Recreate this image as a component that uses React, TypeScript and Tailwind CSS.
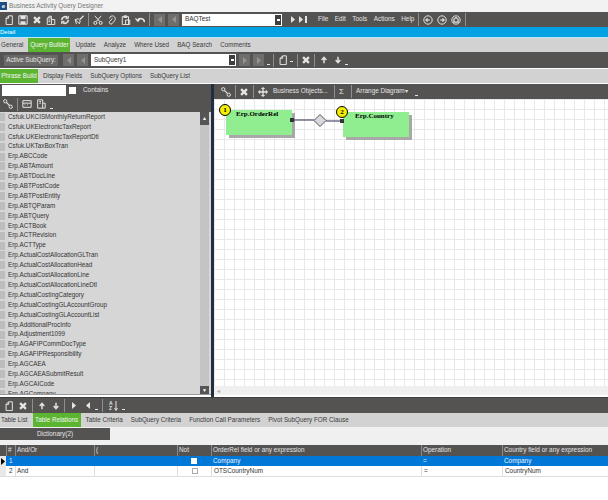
import React from "react";

const ink = "#e4e4e4";

function Ic({ w = 10, children }: { w?: number; children: React.ReactNode }) {
  return (
    <svg width={w} height={w} viewBox="0 0 12 12" className="shrink-0" fill="none" stroke={ink} strokeWidth="1.200">
      {children}
    </svg>
  );
}
const Doc = () => <Ic><path d="M2.500 11.500V4l3-3h4.500v10.500z" /><path d="M2.500 4h3V1" /></Ic>;
const Save = () => <Ic><path d="M1 1h10v10H1z" /><path d="M3.500 1v3.500h5V1M3 11V7.500h6V11" fill="#e4e4e4" stroke="none" /><path d="M3.500 1v3.500h5V1" /></Ic>;
const Cross = () => <Ic><path d="M2.500 2.500l7 7M9.500 2.500l-7 7" strokeWidth="2.800" /></Ic>;
const Copy = () => <Ic><path d="M1.500 3.500h5v8h-5zM6.500 5.500h4v6h-4M3.500 3.500v-2h3v2" /><path d="M3 6h2M3 8h2" /></Ic>;
const Refresh = () => <Ic><path d="M10 6a4 4 0 0 1-7 2.600M2 6a4 4 0 0 1 7-2.600" strokeWidth="2" /><path d="M10 1v3.500H6.500M2 11V7.500h3.500" /></Ic>;
const Brush = () => <Ic><path d="M11.500 1L7 5.500" strokeWidth="1.600" /><path d="M1.500 5.500l5 5 1-3.500-2.500-2.500zM1.500 5.500l1.500 5.500" /></Ic>;
const Scissors = () => <Ic><circle cx="2.800" cy="9.500" r="1.800" /><circle cx="9.200" cy="9.500" r="1.800" /><path d="M3.800 8l6-7M8.200 8l-6-7" /></Ic>;
const Clip = () => <Ic><path d="M3 4a3.500 3.500 0 1 1 6 3l-3 3.500a2 2 0 0 1-3-2.500l3.500-4" /></Ic>;
const Paste = () => <Ic><path d="M1.500 2h7.500v9.500H1.500zM3.500 1h3.500v2H3.500z" /><path d="M5.500 6h5v5.500h-5z" /></Ic>;
const Undo = () => <Ic><path d="M3 6.500a4.200 3.500 0 0 1 8 2" strokeWidth="1.800" /><path d="M.5 4l3 3.500L6 4.500" strokeWidth="1.500" /></Ic>;
const Link = () => <Ic><rect x=".8" y=".8" width="3.800" height="3.800" rx="1.600" /><rect x="7.400" y="7.400" width="3.800" height="3.800" rx="1.600" /><path d="M4 4l4 4" strokeWidth="1.500" /></Ic>;
const Up = () => <Ic w={8}><path d="M6 2v9M2.500 6L6 2l3.500 4" strokeWidth="2.200" /></Ic>;
const Down = () => <Ic w={8}><path d="M6 10V1M2.500 6L6 10l3.500-4" strokeWidth="2.200" /></Ic>;
const Move = () => <Ic><path d="M6 2v8M2 6h8" strokeWidth="1.600" /><path d="M4 2.500L6 .5l2 2M4 9.500L6 11.500l2-2M2.500 4L.5 6l2 2M9.500 4l2 2-2 2" fill="#e4e4e4" /></Ic>;
const Sep = () => <span className="w-px h-[13px] bg-[#8f8f8f] shrink-0" />;
const Drop = () => <span className="self-end mb-[3px] w-[3px] h-[1px] bg-[#e4e4e4] shrink-0" />;
const Circ = ({ d }: { d: string }) => <Ic><circle cx="6" cy="6" r="5" /><path d={d} strokeWidth="1.400" /></Ic>;
const Tri = ({ left, c = "#e4e4e4" }: { left?: boolean; c?: string }) => (
  <svg width="6" height="9" viewBox="0 0 6 9" className="shrink-0"><path d={left ? "M5 1v7L1 4.500z" : "M1 1v7l4-3.500z"} fill={c} /></svg>
);
const Grey = ({ left = true }: { left?: boolean }) => (
  <span className="w-[11px] h-[12px] bg-[#6f6e6d] flex items-center justify-center shrink-0"><Tri left={left} c="#939393" /></span>
);
const Combo = () => (
  <span className="w-[8px] h-[12px] bg-[#3f3f3f] border border-white flex items-center justify-center shrink-0"><span className="w-[3px] h-[2px] bg-white" /></span>
);

const Tab = ({ label, on, w }: { label: string; on?: boolean; w?: string }) =>
  on ? (
    <span className={`bg-[#5cb531] text-[#f4f4f4] h-full flex items-center justify-center -mx-[3px] ${w ?? ""}`}>{label}</span>
  ) : (
    <span className="text-[#3a3a3a] flex items-center h-full">{label}</span>
  );

const tables = [
  "Csfuk.UKCISMonthlyReturnReport", "Csfuk.UKElectronicTaxReport", "Csfuk.UKElectronicTaxReportDtl", "Csfuk.UKTaxBoxTran",
  "Erp.ABCCode", "Erp.ABTAmount", "Erp.ABTDocLine", "Erp.ABTPostCode", "Erp.ABTPostEntity", "Erp.ABTQParam", "Erp.ABTQuery",
  "Erp.ACTBook", "Erp.ACTRevision", "Erp.ACTType", "Erp.ActualCostAllocationGLTran", "Erp.ActualCostAllocationHead",
  "Erp.ActualCostAllocationLine", "Erp.ActualCostAllocationLineDtl", "Erp.ActualCostingCategory", "Erp.ActualCostingGLAccountGroup",
  "Erp.ActualCostingGLAccountList", "Erp.AdditionalProcInfo", "Erp.Adjustment1099", "Erp.AGAFIPCommDocType", "Erp.AGAFIPResponsibility",
  "Erp.AGCAEA", "Erp.AGCAEASubmitResult", "Erp.AGCAICode", "Erp.AGCompany",
];

const Badge = ({ n }: { n: number }) => (
  <span className="absolute -left-[7px] -top-[6px] w-[12px] h-[12px] rounded-full bg-[#f5f000] border border-black text-[7px] font-bold text-black flex items-center justify-center leading-none font-['Liberation_Serif',serif]">{n}</span>
);

const Node = ({ n, name, cls, pad }: { n: number; name: string; cls: string; pad: string }) => (
  <div className={`absolute bg-[#90ee90] shadow-[3px_3px_0_#a8a8a8] h-[25px] w-[66px] ${cls}`}>
    <Badge n={n} />
    <div className={`absolute top-[1px] text-[7px] font-bold text-black font-['Liberation_Serif',serif] whitespace-nowrap ${pad}`}>{name}</div>
  </div>
);

const cols = "grid grid-cols-[6px_9px_79px_83px_34px_210px_81px_1fr]";
const hc = "pl-[1px] h-full flex items-center border-l border-[#8a8a8a]";
const cc = "h-full flex items-center border-l border-[#dcdcdc]";

export default function App() {
  return (
    <div className="w-[608px] h-[500px] bg-white overflow-hidden flex flex-col font-['Liberation_Sans',sans-serif] text-[6.400px] leading-none">
      {/* title */}
      <div className="h-[12px] bg-[#f2f2f2] flex items-center gap-[2px] text-[#777]">
        <span className="w-[7px] h-[8px] bg-[#1d4f86] flex items-center justify-center text-white text-[6px] font-bold">e</span>
        Business Activity Query Designer
      </div>
      {/* main toolbar */}
      <div className="h-[15px] bg-[#555352] flex items-center text-[#e4e4e4] pl-[4px] gap-[4px]">
        <Doc /><Save /><Cross /><Copy /><Refresh /><Brush /><Sep /><Scissors /><Clip /><Paste /><Undo /><Sep />
        <span className="flex gap-[3px]"><Grey /><Grey /></span>
        <div className="flex mr-[4px]">
          <div className="w-[92px] h-[12px] -ml-[1px] bg-white text-[#333] flex items-center pl-[3px]">BAQTest</div>
          <Combo />
        </div>
        <span className="flex items-center gap-[2px]"><Tri /><Tri /><span className="w-[2px] h-[7px] -ml-[1px] bg-[#e4e4e4]" /></span>
        <span className="ml-[3px]"><Sep /></span>
        <span className="flex gap-[6.500px]"><span>File</span><span>Edit</span><span>Tools</span><span>Actions</span><span>Help</span></span>
        <Sep />
        <Circ d="M8.500 6h-5M5.500 4L3.500 6l2 2" /><Circ d="M3.500 6h5M6.500 4l2 2-2 2" /><Circ d="M3.500 8.500V5L6 3l2.500 2v3.500z" /><Sep />
      </div>
      {/* detail */}
      <div className="h-[11px] bg-[#00a2e3] border-b border-[#bfe6f5] text-white text-[6px] flex items-center">Detail</div>
      {/* tabs */}
      <div className="h-[14px] bg-[#d2d2d2] flex items-center gap-[8px] pl-[1px] text-[6.300px]">
        <Tab label="General" />
        <Tab label="Query Builder" on w="w-[42px]" />
        <Tab label="Update" /><Tab label="Analyze" /><Tab label="Where Used" /><Tab label="BAQ Search" /><Tab label="Comments" />
      </div>
      {/* subquery toolbar */}
      <div className="h-[17px] bg-[#555352] flex items-center text-[#e4e4e4] pl-[4px] gap-[3px] border-b border-white">
        <span className="bg-[#6a6968] h-[11px] w-[54px] flex items-center justify-center mr-[2px]">Active SubQuery:</span>
        <Grey /><Grey />
        <div className="flex">
          <div className="w-[137px] h-[12px] bg-white text-[#333] flex items-center pl-[3px]">SubQuery1</div>
          <Combo />
        </div>
        <Grey left={false} /><Grey left={false} /><Drop /><Sep />
        <span className="flex gap-[2px] ml-[1px] mr-[1px]"><Doc /><Drop /></span>
        <Sep /><Cross /><Sep />
        <span className="flex gap-[6px] ml-[2px]"><Up /><Down /></span><Drop />
      </div>
      {/* subtabs */}
      <div className="h-[15px] bg-[#d2d2d2] flex items-center gap-[8px] border-b border-white text-[6.300px]">
        <span className="-mr-[3px]"><span className="bg-[#5cb531] text-[#f4f4f4] h-[14px] w-[38px] flex items-center justify-center">Phrase Build</span></span>
        <Tab label="Display Fields" /><Tab label="SubQuery Options" /><Tab label="SubQuery List" />
      </div>
      {/* middle */}
      <div className="h-[313px] flex bg-white">
        <div className="w-[211px] flex flex-col bg-[#d6d6d6]">
          <div className="h-[12px] bg-[#555352] flex items-center text-[#e4e4e4] pl-[2px]">
            <span className="w-[64px] h-[11px] bg-white" />
            <span className="w-[7px] h-[7px] bg-white ml-[3px] mr-[7px]" />
            Contains
          </div>
          <div className="h-[16px] bg-[#555352] flex items-center pl-[3px] gap-[4px]">
            <Link /><Sep /><Ic><path d="M1 2h10v8H1zM1 5h10M3 7h1M6 7h1M9 7h0" /></Ic><Ic><path d="M2 1h6v10H2zM8 5h3v6H8M4 3h2M4 5h2" /></Ic><Drop />
          </div>
          <div className="flex-1 flex min-h-0 pr-[2px]">
            <div className="flex-1 min-w-0 overflow-hidden">
              {tables.map((t) => (
                <div key={t} className="h-[9.900px] flex items-center text-[#333] text-[6.300px]">
                  <span className="w-[5px] h-[8px] bg-[#bdbdbd] mr-[3px]" />
                  {t}
                </div>
              ))}
            </div>
            <div className="w-[9px] bg-[#c4c4c4] flex flex-col justify-between">
              <span className="h-[13px] bg-[#555] flex items-center justify-center text-white text-[5px]">▲</span>
              <span className="h-[8px] bg-[#555] flex items-center justify-center text-white text-[5px]">▼</span>
            </div>
          </div>
          <div className="h-[1px] bg-[#999]" />
          <div className="h-[2px] bg-white" />
        </div>
        <div className="w-[3px] bg-[#1f2f3d]" />
        <div className="flex-1 flex flex-col">
          <div className="h-[15px] bg-[#555352] flex items-center text-[#e4e4e4] pl-[7px] gap-[4px] shrink-0">
            <Link /><Sep /><span className="-ml-[1px]"><Cross /></span><Sep /><Move />
            <span className="ml-[1px] w-[57px]">Business Objects...</span><Sep />
            <span className="text-[8px] w-[8px]">Σ</span><Sep />
            <span className="w-[55px]">Arrange Diagram▾</span><Drop />
          </div>
          <div className="flex-1 relative bg-white bg-[linear-gradient(#e8e8e8_1px,transparent_1px),linear-gradient(90deg,#e8e8e8_1px,transparent_1px)] bg-[size:10px_10px]">
            <Node n={1} name="Erp.OrderRel" cls="left-[12px] top-[11px]" pad="left-[10px]" />
            <Node n={2} name="Erp.Country" cls="left-[129px] top-[13px]" pad="left-[12px]" />
            <svg className="absolute left-[75px] top-[13px]" width="58" height="17" viewBox="0 0 58 17">
              <path d="M3 8h22M37 9h16" stroke="#2a2a55" strokeWidth="1.200" />
              <path d="M31 2.500l6 6-6 6-6-6z" fill="#d8d8e0" stroke="#555" strokeWidth="1" />
              <rect x="1" y="6" width="4" height="4" fill="#333" />
              <rect x="51" y="7" width="4" height="4" fill="#333" />
            </svg>
            <div className="absolute left-0 right-0 bottom-[2px] h-[9px] bg-[#efefef] flex items-center pl-[3px] text-[#aaa] text-[6px]">◂</div>
            <div className="absolute left-0 right-0 bottom-0 h-[2px] bg-white" />
          </div>
        </div>
      </div>
      {/* bottom toolbar */}
      <div className="h-[16px] bg-[#555352] border-t border-[#3c3c3c] flex items-center pl-[4px] gap-[4px]">
        <Doc /><Cross /><Sep />
        <span className="flex gap-[6px] ml-[1px]"><Up /><Down /></span><Sep />
        <span className="flex gap-[8px] ml-[2px]"><Tri /><Tri left /></span><Drop /><Sep />
        <span className="flex items-center gap-[1px] ml-[2px]">
          <span className="flex flex-col text-[5px] font-bold text-[#e4e4e4]"><span>A</span><span>Z</span></span>
          <svg width="4" height="10" viewBox="0 0 4 10" fill="none" stroke={ink}><path d="M2 0v9M.5 7L2 9.500 3.500 7" /></svg>
        </span>
        <Drop />
      </div>
      {/* bottom tabs */}
      <div className="h-[14px] bg-[#d2d2d2] flex items-center gap-[8px] pl-[1px] text-[6.300px]">
        <Tab label="Table List" />
        <Tab label="Table Relations" on w="w-[48px]" />
        <Tab label="Table Criteria" /><Tab label="SubQuery Criteria" /><Tab label="Function Call Parameters" /><Tab label="Pivot SubQuery FOR Clause" />
      </div>
      {/* dictionary */}
      <div className="h-[18px] bg-[#f0f0f0] pt-[1px]">
        <div className="w-[110px] h-[12px] bg-[#555352] text-[#e4e4e4] flex items-center justify-center">Dictionary(2)</div>
      </div>
      {/* grid */}
      <div className={`${cols} h-[11px] bg-[#555352] text-[#e4e4e4] items-center`}>
        <span /><span className={hc}>#</span><span className={hc}>And/Or</span><span className={hc}>(</span><span className={hc}>Not</span>
        <span className={hc}>OrderRel field or any expression</span><span className={hc}>Operation</span><span className={hc}>Country field or any expression</span>
      </div>
      <div className={`${cols} h-[10px] bg-[#0078d7] text-[#e8f2ff] items-center`}>
        <span className="bg-[#e8e8e8] h-full flex items-center"><Tri c="#000" /></span>
        <span className="pl-[3px]">1</span><span /><span />
        <span className="flex justify-center"><span className="w-[6px] h-[6px] bg-white" /></span>
        <span className="pl-[2px]">Company</span><span className="pl-[2px]">=</span><span className="pl-[2px]">Company</span>
      </div>
      <div className={`${cols} h-[11px] bg-white text-[#333] items-center border-b border-[#ddd]`}>
        <span className="bg-[#e8e8e8] h-full" />
        <span className="pl-[3px] h-full flex items-center">2</span><span className={`${cc} pl-[1px]`}>And</span><span className={cc} />
        <span className={`${cc} justify-center`}><span className="w-[6px] h-[6px] border border-[#aaa]" /></span>
        <span className={`${cc} pl-[2px]`}>OTSCountryNum</span><span className={`${cc} pl-[2px]`}>=</span><span className={`${cc} pl-[2px]`}>CountryNum</span>
      </div>
    </div>
  );
}
